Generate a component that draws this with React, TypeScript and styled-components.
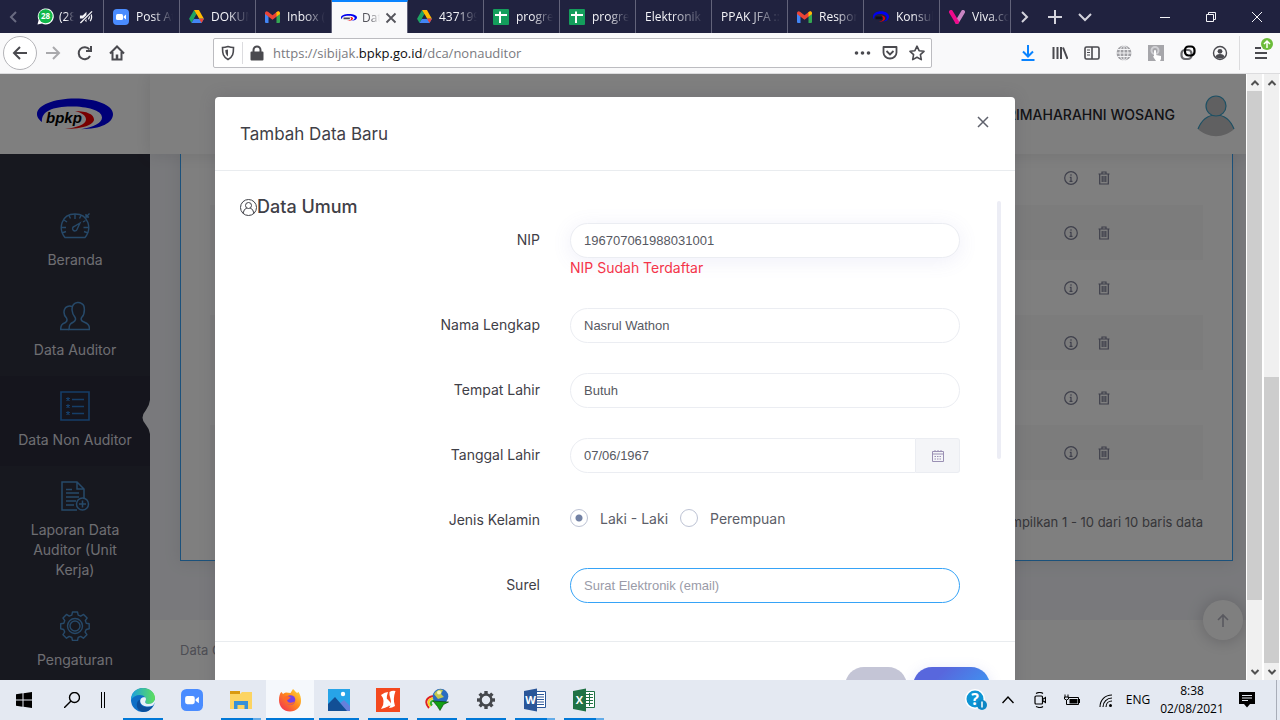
import React from "react";
import styled, { createGlobalStyle, css } from "styled-components";

const ui = `Inter, "Liberation Sans", sans-serif`;
const chrome = `"Open Sans", "Noto Sans", sans-serif`;

const Global = createGlobalStyle`
  * { box-sizing: border-box; }
  body { margin: 0; overflow: hidden; }
  button { border: 0; padding: 0; margin: 0; background: none; color: inherit; font: inherit; cursor: pointer; }
  a { color: inherit; text-decoration: none; }
  svg { display: block; flex: none; }
`;

const Screen = styled.div`
  display: grid;
  grid-template-rows: auto auto minmax(0, 1fr) auto;
  height: 100vh;
  font-family: ${ui};
`;

/* ---------- Browser chrome ---------- */

const TabBar = styled.div`
  display: flex;
  height: 33px;
  background: #20223f;
  color: #f4f4f8;
  font: 12px/33px ${chrome};
`;
const ScrollTabs = styled.button`
  width: 28px;
  display: grid;
  place-items: center;
  color: #686a80;
`;
const TabStrip = styled.div`
  display: flex;
  flex: 0 1 983px;
  min-width: 0;
  overflow: hidden;
  border-right: 1px solid #62637a;
`;
const Tab = styled.button<{ $active?: boolean; $tight?: boolean }>`
  display: flex;
  align-items: center;
  flex: none;
  gap: ${(p) => (p.$tight ? 5 : 7)}px;
  width: 76px;
  padding: 0 ${(p) => (p.$tight ? 10 : 6)}px 0 9px;
  border-right: 1px solid #62637a;
  text-align: left;
  ${(p) => p.$active && css`
    background: #f9f9fa;
    color: #55555c;
    border-top: 2px solid #0a84ff;
    line-height: 31px;
  `}
`;
const TabText = styled.span`
  flex: 1;
  min-width: 0;
  overflow: hidden;
  white-space: nowrap;
  mask-image: linear-gradient(to right, #000 45%, transparent);
`;
const StripTools = styled.div`
  display: flex;
  align-items: center;
  color: #d3d3dc;
  button { width: 30px; display: grid; place-items: center; }
`;
const WindowTools = styled.div`
  display: flex;
  align-items: center;
  margin-left: auto;
  button { width: 46px; height: 33px; display: grid; place-items: center; }
`;

const NavBar = styled.div`
  display: flex;
  align-items: center;
  height: 41px;
  padding: 0 3px;
  background: #f9f9fa;
  border-bottom: 1px solid #dcdcde;
  color: #4a4a4f;
`;
const NavButton = styled.button<{ $dim?: boolean }>`
  display: grid;
  place-items: center;
  position: relative;
  width: 32px;
  height: 34px;
  opacity: ${(p) => (p.$dim ? 0.45 : 1)};
`;
const BackButton = styled(NavButton)`
  width: 34px;
  border: 1px solid #b4b4b8;
  border-radius: 50%;
  background: #fff;
`;
const Address = styled.div`
  display: flex;
  align-items: center;
  flex: 0 1 719px;
  min-width: 0;
  height: 30px;
  margin: 0 auto 0 80px;
  padding: 0 6px;
  border: 1px solid #bcbcc0;
  border-radius: 2px;
  background: #fff;
`;
const AddressDivider = styled.span`
  width: 1px;
  height: 22px;
  margin: 0 6px;
  background: #dcdcdf;
`;
const AddressText = styled.div`
  flex: 1;
  min-width: 0;
  margin-left: 8px;
  overflow: hidden;
  white-space: nowrap;
  font: 13px/28px ${chrome};
  color: #7a7a80;
  strong { font-weight: 400; color: #0c0c0d; }
`;
const AddressTools = styled.div`
  display: flex;
  gap: 11px;
`;
const MenuButton = styled(NavButton)`
  width: 38px;
  margin-left: 3px;
  padding-left: 5px;
  border-left: 1px solid #dcdcde;
`;
const UpdateBadge = styled.span`
  position: absolute;
  top: 2px;
  right: 4px;
`;

/* ---------- Page ---------- */

const Viewport = styled.div`
  display: flex;
  min-height: 0;
  background: #fff;
`;
const AppFrame = styled.div`
  position: relative;
  display: grid;
  grid-template-columns: 150px minmax(0, 1fr);
  flex: 1;
  min-width: 0;
  overflow: hidden;
`;
const Sidebar = styled.aside`
  display: flex;
  flex-direction: column;
  min-height: 0;
  background: #2f303e;
`;
const Brand = styled.div`
  display: grid;
  place-items: center;
  flex: none;
  height: 80px;
  background: #fff;
`;
const Menu = styled.nav`
  padding-top: 42px;
`;
const MenuItem = styled.a<{ $active?: boolean }>`
  position: relative;
  display: flex;
  flex-direction: column;
  align-items: center;
  gap: 9px;
  padding: 15px 16px 16px;
  color: #dcdce2;
  background: ${(p) => (p.$active ? "#2a2b3a" : "transparent")};
  font-size: 14px;
  line-height: 20px;
  text-align: center;
  svg { color: ${(p) => (p.$active ? "#2c7cd0" : "#4d92d2")}; }
`;
const Notch = styled.span`
  position: absolute;
  right: 0;
  top: 24px;
`;

const Main = styled.div`
  display: flex;
  flex-direction: column;
  min-width: 0;
  min-height: 0;
  background: #f2f3f8;
`;
const TopBar = styled.header`
  position: relative;
  z-index: 1;
  display: flex;
  align-items: center;
  justify-content: flex-end;
  gap: 22px;
  flex: none;
  height: 80px;
  padding-right: 11px;
  background: #fff;
  box-shadow: 0 1px 15px 1px rgba(69, 65, 78, 0.12);
  color: #26262c;
  font-size: 14px;
  font-weight: 500;
`;
const Card = styled.section`
  flex: none;
  margin: -5px 13px 59px 30px;
  padding: 0 29px 27px;
  border: 1px solid #36a3f7;
  background: #fff;
  box-shadow: 0 1px 15px 1px rgba(69, 65, 78, 0.1);
`;
const Table = styled.table`
  width: 100%;
  border-collapse: collapse;
  tr:nth-child(even) { background: #f8f8f9; }
  td { height: 55px; padding: 0; }
`;
const ActionCell = styled.td`
  width: 139px;
`;
const Actions = styled.div`
  display: flex;
  gap: 20px;
  color: #7d7f96;
`;
const Summary = styled.p`
  margin: 31px 0 0;
  text-align: right;
  font-size: 13px;
  line-height: 22px;
  color: #6c6c72;
`;
const Footer = styled.footer`
  flex: 1;
  padding: 20px 30px;
  background: #fff;
  color: #9a9ba8;
  font-size: 13px;
  line-height: 20px;
`;
const ToTop = styled.button`
  position: absolute;
  right: 3px;
  bottom: 40px;
  display: grid;
  place-items: center;
  width: 40px;
  height: 40px;
  border-radius: 50%;
  background: #fff;
  color: #b2b2bf;
  box-shadow: 0 1px 15px 1px rgba(69, 65, 78, 0.25);
`;

/* ---------- Modal ---------- */

const Backdrop = styled.div`
  position: absolute;
  inset: 0;
  z-index: 2;
  display: flex;
  justify-content: center;
  align-items: flex-start;
  padding: 23px 16px 0 0;
  overflow: hidden;
  background: rgba(0, 0, 0, 0.5);
`;
const Dialog = styled.div`
  flex: 0 1 800px;
  border-radius: 4px;
  background: #fff;
  box-shadow: 0 0 15px 1px rgba(69, 65, 78, 0.2);
  color: #3f4047;
`;
const DialogHead = styled.div`
  display: flex;
  justify-content: space-between;
  align-items: flex-start;
  height: 74px;
  padding: 18px 25px;
  border-bottom: 1px solid #e9ecef;
`;
const DialogTitle = styled.h5`
  margin: 8px 0 0;
  font-size: 17px;
  line-height: 22px;
  font-weight: 400;
`;
const CloseButton = styled.button`
  color: #5f616c;
`;
const DialogBody = styled.div`
  display: flex;
  align-items: flex-start;
  padding: 25px 14px 38px 25px;
  border-bottom: 1px solid #e9ecef;
`;
const Form = styled.form`
  flex: 1;
  padding-right: 37px;
`;
const ScrollThumb = styled.div`
  width: 4px;
  height: 258px;
  margin-top: 5px;
  border-radius: 4px;
  background: #ecedf5;
`;
const SectionTitle = styled.h4`
  display: flex;
  align-items: center;
  margin: 0 0 5px;
  font-size: 18px;
  line-height: 22px;
  font-weight: 500;
`;
const Row = styled.div`
  display: grid;
  grid-template-columns: 10fr 13fr;
  column-gap: 30px;
  & + & { margin-top: 30px; }
`;
const Label = styled.label`
  font-size: 14px;
  line-height: 34px;
  text-align: right;
`;
const Input = styled.input<{ $state?: "raised" | "focus" }>`
  display: block;
  width: 100%;
  min-width: 0;
  height: 35px;
  padding: 0 13px;
  border: 1px solid ${(p) => (p.$state === "focus" ? "#36a3f7" : "#ebedf2")};
  border-radius: 20px;
  outline: 0;
  background: #fff;
  box-shadow: ${(p) => (p.$state === "raised" ? "0 3px 20px 0 rgba(113, 106, 202, 0.11)" : "none")};
  color: #575962;
  font: 13px "Liberation Sans", Arial, sans-serif;
  &::placeholder { color: #9a9ba8; opacity: 1; }
`;
const ErrorText = styled.div`
  font-size: 14px;
  line-height: 20px;
  color: #f4354a;
`;
const InputGroup = styled.div`
  display: flex;
  ${Input} { flex: 1; border-radius: 20px 0 0 20px; }
`;
const Addon = styled.button`
  display: grid;
  place-items: center;
  width: 44px;
  border: 1px solid #ebedf2;
  border-left: 0;
  border-radius: 0 3px 3px 0;
  background: #f4f5f8;
  color: #9a90b4;
`;
const Choices = styled.div`
  display: flex;
  gap: 12px;
  height: 35px;
`;
const Choice = styled.label`
  display: flex;
  align-items: center;
  gap: 12px;
  height: 30px;
  font-size: 14px;
  color: #5c5e68;
`;
const Radio = styled.input`
  appearance: none;
  width: 18px;
  height: 18px;
  margin: 0;
  border: 1px solid #bdc3d4;
  border-radius: 50%;
  &:checked { background: radial-gradient(circle, #7281a4 3px, transparent 4px); }
`;
const DialogFoot = styled.div`
  display: flex;
  justify-content: flex-end;
  gap: 6px;
  padding: 25px;
`;
const Action = styled.button<{ $primary?: boolean }>`
  width: ${(p) => (p.$primary ? 77 : 62)}px;
  height: 38px;
  border-radius: 20px;
  background: ${(p) => (p.$primary ? "linear-gradient(135deg, #5867dd 30%, #36a3f7)" : "#c4c5d6")};
  box-shadow: ${(p) => (p.$primary ? "0 3px 14px rgba(88, 103, 221, 0.18)" : "none")};
`;

/* ---------- Window scroll bars ---------- */

const Bar = styled.div`
  display: flex;
  flex-direction: column;
  flex: none;
  width: 17px;
  border-left: 1px solid #fff;
  border-right: 1px solid #fff;
  background: #f0f0f0;
  color: #505050;
`;
const BarArrow = styled.button`
  display: grid;
  place-items: center;
  width: 15px;
  height: 17px;
`;
const Track = styled.div`
  flex: 1;
`;
const Thumb = styled.div<{ $from: number; $size: number }>`
  height: ${(p) => p.$from + p.$size}%;
  background: linear-gradient(#cdcdcd, #cdcdcd) bottom / 100% ${(p) => (p.$size / (p.$from + p.$size)) * 100}% no-repeat;
`;

/* ---------- Taskbar ---------- */

const Taskbar = styled.div`
  display: flex;
  align-items: stretch;
  height: 40px;
  background: #e4e9f2;
  color: #000;
`;
const TaskGroup = styled.div`
  display: flex;
  gap: 1px;
`;
const StartGroup = styled(TaskGroup)`
  gap: 0;
  margin-right: 9px;
`;
const TaskButton = styled.button<{ $w?: number; $active?: boolean; $line?: "one" | "many" }>`
  display: grid;
  place-items: center;
  width: ${(p) => p.$w ?? 48}px;
  ${(p) => p.$active && css`background-color: #f5f8fc;`}
  ${(p) => p.$line && css`
    background-image: linear-gradient(to right, #0078d7 ${p.$line === "many" ? "80%" : "100%"}, #62abe8 0);
    background-repeat: no-repeat;
    background-size: ${p.$active ? 48 : 40}px 2px;
    background-position: bottom center;
  `}
`;
const Tray = styled.div`
  display: flex;
  align-items: center;
  margin-left: auto;
  font: 12px/18px ${chrome};
`;
const TrayButton = styled.button<{ $w?: number }>`
  display: grid;
  place-items: center;
  width: ${(p) => p.$w ?? 32}px;
  height: 40px;
  white-space: nowrap;
`;
const Clock = styled.time`
  width: 76px;
  text-align: center;
`;
const Peek = styled.span`
  width: 4px;
  height: 40px;
  margin-left: 12px;
  border-left: 1px solid #a8adb8;
`;

/* ---------- Drawings ---------- */

type LineProps = { w?: number; h?: number; box?: string; sw?: number; children: React.ReactNode };
const Line = ({ w = 16, h = w, box = `0 0 ${w} ${h}`, sw = 1, children }: LineProps) => (
  <svg width={w} height={h} viewBox={box} fill="none" stroke="currentColor" strokeWidth={sw} aria-hidden="true">
    {children}
  </svg>
);

const Chevron = ({ d, sw = 2 }: { d: string; sw?: number }) => <Line sw={sw}><path d={d} /></Line>;

const WhatsApp = () => (
  <svg width="17" height="17" viewBox="0 0 17 17" aria-hidden="true">
    <path d="M0.5 16.5 1.6 12A8 8 0 1 1 5 15.5Z" fill="#fff" />
    <circle cx="8.6" cy="8.3" r="7" fill="#12b84a" />
    <text x="8.6" y="11.2" fontSize="8" fontWeight="700" textAnchor="middle" fill="#fff" fontFamily="Open Sans">28</text>
  </svg>
);
const Muted = () => (
  <Line w={14} box="0 0 15 15" sw={1.4}>
    <path d="M1 6h3l4-4v11L4 9H1Z" fill="currentColor" stroke="none" />
    <path d="M10 5q2 2.5 0 5M12 3q3 4.5 0 9" />
    <path d="M1.5 14 14 1.5" stroke="#20223f" strokeWidth="3" />
    <path d="M1.5 14 14 1.5" />
  </Line>
);
const ZoomLogo = ({ s = 16 }: { s?: number }) => (
  <svg width={s} height={s} viewBox="0 0 16 16" aria-hidden="true">
    <rect width="16" height="16" rx="4" fill="#4a8cff" />
    <rect x="3" y="5" width="7" height="6" rx="1.5" fill="#fff" />
    <path d="M10.6 7.4 13 5.6v4.8l-2.4-1.8Z" fill="#fff" />
  </svg>
);
const Drive = () => (
  <svg width="15" height="13" viewBox="0 0 16 14" aria-hidden="true">
    <path d="M5.4 0h5.2L8 4.5Z" fill="#188038" />
    <path d="M5.4 0 0 9.3 2.6 14 8 4.5Z" fill="#1ea362" />
    <path d="M5.4 0h5.2L16 9.3h-5.3Z" fill="#ffba00" />
    <path d="M5.3 9.3H16L13.4 14H2.6Z" fill="#4285f4" />
    <path d="M10.7 9.3H16L13.4 14Z" fill="#ea4335" />
    <path d="M8 4.7 5.3 9.3h5.4Z" fill="#20223f" />
  </svg>
);
const Gmail = () => (
  <svg width="15" height="12" viewBox="0 0 15 12" aria-hidden="true">
    <path d="M0 2v9q0 1 1 1h2.5V4.8Z" fill="#4285f4" />
    <path d="M15 2v9q0 1-1 1h-2.5V4.8Z" fill="#34a853" />
    <path d="M0 1.8Q.8-.8 3 .8l4.5 3.5L12 .8q2.200-1.600 3 1v1.100L7.500 8.700 0 2.900Z" fill="#ea4335" />
    <path d="M11.500 1.200 12 .8q2.200-1.600 3 1v1.100l-3.500 2.700Z" fill="#fbbc04" />
  </svg>
);
const Sheets = () => (
  <svg width="16" height="16" viewBox="0 0 16 16" aria-hidden="true">
    <rect width="16" height="16" rx="1" fill="#149e5c" />
    <path d="M6 2.500h2V5h6v2H8v7H6V7H2V5h4Z" fill="#fff" />
  </svg>
);
const Bpkp = ({ w, h, text = true, dark }: { w: number; h: number; text?: boolean; dark?: boolean }) => (
  <svg width={w} height={h} viewBox="0 0 76 32" preserveAspectRatio="none" aria-hidden="true">
    <path d="M38 0.500C59 .5 76 7 76 16S64 31 44 31.200C57 29 65 25 65 19.500 65 12 50 8.500 34 8.500 16 8.500 4 13 5 24 1 21 0 18.500 0 16 0 7 17 .5 38 .5Z" fill="#0000f0" />
    <path d="M38 13c12 0 19 3.500 19 8.500S46 31 28 31c11-1 21-4.500 21-9.500 0-4-4-6.500-11-8.500Z" fill="#f00000" />
    {text ? (
      <text x="9" y="25" fontFamily="Liberation Sans" fontSize="15" fontWeight="700" fontStyle="italic" fill="#000">bpkp</text>
    ) : (
      <path d="M12 16h30v8H12Z" fill={dark ? "#101018" : "#445"} />
    )}
  </svg>
);
const Viva = () => (
  <svg width="16" height="14" viewBox="0 0 16 14" fill="none" strokeWidth="4" strokeLinecap="round" aria-hidden="true">
    <path d="M8 12 14 2" stroke="#c884c2" />
    <path d="M2 2l6 10" stroke="#ee0a8c" />
  </svg>
);

const Globe = () => (
  <Line w={16} sw={1}>
    <circle cx="8" cy="8" r="7.500" fill="#a0a0a4" stroke="none" />
    <g stroke="#f4f4f6"><path d="M0 8h16M1.500 4.500h13M1.500 11.500h13M8 0v16" /><ellipse cx="8" cy="8" rx="4" ry="7.500" /></g>
  </Line>
);

const Gauge = () => (
  <Line w={30} sw={1.4}>
    <path d="M5 26.500C-2 18 1 3 15 3s17 15 10 23.500Z" />
    <path d="M15 3v5M9 4.500l1.500 3M4 9l3 2M1 16.500h5M2 22l4-1.500M28.500 16.500h-5M28 22l-4-1.500M21 4.500l-1.500 3M25.500 9.500 23 11M20 12l-6 3.500a2.300 2.300 0 1 0 3 3ZM29.500 2.500 26 6M26 3v3h3" />
  </Line>
);
const People = () => (
  <Line w={30} sw={1.5}>
    <path d="M9 28.500h20.500c0-5-2-6-5.500-7.500-3-1-3.500-3-2-5 3-3 3.500-12-.500-13.500-2-1.500-6-1.500-8 1-2.500 3-1.500 9 1 12 1.500 2 1.500 4-1 5.500-3 1.500-4.500 2.500-4.500 7.500Z" />
    <path d="M12 5.500c-3-1-6.500 0-7.500 3-1 3 0 6.500 2 8.500 1 2 1 3-1 4.500C2 23 .7 24 .7 28.500H9" />
  </Line>
);
const List = () => (
  <Line w={30} sw={1.6}>
    <path d="M1 1h28v28H1ZM12 8.500h12M12 15.500h12M12 22.500h12" />
    <path d="M8 6v4M6 7.500h4M6.500 10 8 8l1.500 2M8 13v4M6 14.500h4M6.500 17 8 15l1.500 2M8 20v4M6 21.500h4M6.500 24 8 22l1.500 2" strokeWidth="1" />
  </Line>
);
const Report = () => (
  <Line w={30} sw={1.5}>
    <path d="M17 29H2V1h15l7 7v10M17 1v7h7M6 8.500h6M6 12h13M6 16h13M6 20h10M6 24h8" />
    <circle cx="22.500" cy="23" r="6" /><path d="M22.500 19.500v7M19 23h7" />
  </Line>
);
const Gear = () => (
  <Line w={30} sw={1.4}>
    <circle cx="15" cy="15" r="7.500" /><circle cx="15" cy="15" r="5" />
    <path d="M12.500 1h5l.7 3.200 2.500 1L23.600 3.400l3.500 3.600-1.800 2.600 1 2.600 2.900.6v5l-3 .7-1.100 2.500 1.800 2.700-3.500 3.500-2.700-1.800-2.500 1-.7 3.100h-5l-.7-3-2.600-1.100-2.700 1.800L3 23.700l1.700-2.700-1-2.500-3-.7v-5l3.100-.6 1-2.600L3 7l3.500-3.600 2.700 1.800 2.600-1Z" strokeLinejoin="round" />
  </Line>
);
const Info = () => (
  <Line w={14} sw={1.200}>
    <circle cx="7" cy="7" r="6.300" /><path d="M7 3.200v1.500M5.800 6.300H7v4M5.500 10.300h3" />
  </Line>
);
const Trash = () => (
  <Line w={12} h={14} sw={1.200}>
    <path d="M.5 3h11M4 3V1h4v2M1.700 3v10h8.600V3M4.200 5v6M6 5v6M7.800 5v6" />
  </Line>
);
const Avatar = () => (
  <svg width="38" height="46" viewBox="0 -4 38 46" fill="#c0c0c2" stroke="#3ba0c8" strokeWidth="1.200" aria-hidden="true">
    <path d="M1 34C5 24 11 20 19 20s14 4 18 14C28 43.500 10 43.500 1 34Z" stroke="none" />
    <path d="M1 34C5 24 11 20 19 20s14 4 18 14" />
    <circle cx="19" cy="11" r="10" />
  </svg>
);
const UserCircle = () => (
  <Line w={17} sw={1}>
    <circle cx="8.500" cy="8.500" r="8" /><circle cx="8.500" cy="6.500" r="3" />
    <path d="M3 14.300q1-4.800 3.800-5.200M14 14.300q-1-4.800-3.800-5.200" />
  </Line>
);

const Office = ({ c, l, grid }: { c: string; l: string; grid?: boolean }) => (
  <svg width="24" height="24" viewBox="0 0 24 24" aria-hidden="true">
    <path d="M13 3.500h9.500v16H13Z" fill="#fff" stroke={c} />
    <path d={grid ? "M14 6.500h7M14 9.500h7M14 12.500h7M14 15.500h7M17.500 5v13" : "M14 6.500h7M14 9h7M14 11.500h7M14 14h7M14 16.500h7"} stroke={c} />
    <path d="M1 3 14 .5v23L1 21Z" fill={c} />
    <text x="7.500" y="16" fontSize="11" fontWeight="700" textAnchor="middle" fill="#fff" fontFamily="Open Sans">{l}</text>
  </svg>
);

const Edge = () => (
  <svg width="24" height="24" viewBox="0 0 24 24" aria-hidden="true">
    <defs>
      <linearGradient id="edgeTop" x1="0" x2="1"><stop stopColor="#1aa0e0" /><stop offset="1" stopColor="#5ee05a" /></linearGradient>
    </defs>
    <circle cx="12" cy="12" r="12" fill="#0f6fc6" />
    <path d="M0 12C0 4 6 0 12 0s12 4 12 10c0 4-3 6-6.500 6-3 0-4-1.500-3-3C16 10 13 7 9 7 5 7 1.500 9 0 12Z" fill="url(#edgeTop)" />
    <path d="M9 12c-1 6 5 9 13 6-2 3-5 6-10 6-5-1-7-5-6-9 .5-2 1.500-3 3-3Z" fill="#0c4f9c" />
    <path d="M14.500 9.500c-4-1-6 2-5 5 1.300 4 8 5 12.500 3l2-3v-3c-1 3-4 4.500-6.500 4.500-3 0-4-1.500-3-3 .7-1.500.6-2.500 0-3.500Z" fill="#e8f1f8" />
  </svg>
);
const Explorer = () => (
  <svg width="22" height="20" viewBox="0 0 22 20" aria-hidden="true">
    <path d="M0 1h10v4H0Z" fill="#d99a10" /><path d="M0 4h10l2-2h10v17H0Z" fill="#fcd462" />
    <path d="M4 11h14v8h-3.500v-4h-7v4H4Z" fill="#3690d8" />
  </svg>
);
const Firefox = () => (
  <svg width="24" height="24" viewBox="0 0 24 24" aria-hidden="true">
    <defs>
      <linearGradient id="fox" x1="1" x2="0" y2="1"><stop stopColor="#ffe13d" /><stop offset=".45" stopColor="#ff8a1c" /><stop offset="1" stopColor="#f0245c" /></linearGradient>
    </defs>
    <path d="M1 12C1 8 2 5 3.500 4L5 6c1-1 2-1.500 3-1.500L12.500 5 15 1c2 2 3 3 4 4l1.500-1C22.500 7 23 10 23 13c0 6-5 10.500-11 10.500S1 19 1 12Z" fill="url(#fox)" />
    <circle cx="12.500" cy="12" r="4.800" fill="#7542e5" />
    <path d="M6 9c3-2 5-1 7 1-2 0-2 2-4 2 1 4 6 3 8 1-1 5-10 6-11-4Z" fill="#ff6a2a" />
  </svg>
);
const Photos = () => (
  <svg width="22" height="22" viewBox="0 0 22 22" aria-hidden="true">
    <path d="M0 0h22v22H0Z" fill="#27a4e8" /><path d="m10 16 6-5 6 6v5H10Z" fill="#6480dc" />
    <path d="m0 15 7-7 12 14H0Z" fill="#124f95" /><circle cx="15" cy="5" r="2.200" fill="#fff" />
  </svg>
);
const Nitro = () => (
  <svg width="24" height="24" viewBox="0 0 24 24" aria-hidden="true">
    <path d="M0 0h24v24H0Z" fill="#f4481e" />
    <path d="M5 7q4-3 7-3-3 8 1 14-4 2-8 3 3-4 2.500-8Q7 9 5 7Z" fill="#fff" />
    <path d="M13.500 4q3-2 6-1-3 8-.5 15-3 2-6 2 3-4 1.500-9-1.500-4-1-7Z" fill="#fff" />
    <path d="M7 9q5 1 9 8l-3 1Q9 13 7 9Z" fill="#fff" />
  </svg>
);
const Idm = () => (
  <svg width="24" height="24" viewBox="0 0 24 24" fill="none" aria-hidden="true">
    <path d="M4 20C-2 13 3 8 10 8" stroke="#e02020" strokeWidth="2" /><path d="M5.500 18.500C1 13 5 10 11 10" stroke="#f8d020" strokeWidth="2" /><path d="M7 17.500C4 14 7 12 12 12" stroke="#30b030" strokeWidth="2" />
    <circle cx="15.500" cy="8.500" r="7.800" fill="#2a6cc0" /><path d="M9 6q4-6 9-4l-2 4 3 3-6 2Z" fill="#c4c850" /><circle cx="14" cy="4.500" r="2" fill="#f4f4c0" />
    <path d="M8 13 23.500 14l-5 2.500-3.500 6-2.500-4Z" fill="#12a012" stroke="#063806" strokeWidth=".6" />
  </svg>
);
const SettingsIcon = () => (
  <svg width="20" height="20" viewBox="-10 -10 20 20" fill="none" stroke="#44474c" aria-hidden="true">
    <circle r="5.500" strokeWidth="2.600" />
    {[0, 45, 90, 135, 180, 225, 270, 315].map((a) => (
      <path key={a} d="M0-6v-3" strokeWidth="3.400" transform={`rotate(${a})`} />
    ))}
  </svg>
);
const Windows = () => (
  <svg width="16" height="16" viewBox="0 0 16 16" aria-hidden="true">
    <path d="M0 2.200 6.500 1.300v6.200H0ZM7.500 1.200 16 0v7.500H7.500ZM0 8.500h6.500v6.200L0 13.800ZM7.500 8.500H16V16l-8.500-1.200Z" />
  </svg>
);
const Help = () => (
  <svg width="23" height="22" viewBox="0 0 23 22" aria-hidden="true">
    <circle cx="10" cy="10" r="10" fill="#fff" /><circle cx="10" cy="10" r="8.500" fill="#0c94d4" />
    <text x="10" y="16" fontSize="16" fontWeight="700" textAnchor="middle" fill="#fff" fontFamily="Open Sans">?</text>
    <circle cx="17" cy="16" r="5" fill="#0c86c4" /><path d="M17 12.500v6" stroke="#fff" strokeWidth="1.500" />
  </svg>
);

/* ---------- Data ---------- */

const tabsBefore = [
  { icon: <ZoomLogo />, text: "Post At" },
  { icon: <Drive />, text: "DOKUM" },
  { icon: <Gmail />, text: "Inbox (" },
];
const tabsAfter = [
  { icon: <Drive />, text: "437199" },
  { icon: <Sheets />, text: "progre" },
  { icon: <Sheets />, text: "progre" },
  { icon: null, text: "Elektronik B" },
  { icon: null, text: "PPAK JFA ::" },
  { icon: <Gmail />, text: "Respon" },
  { icon: <Bpkp w={16} h={11} text={false} dark />, text: "Konsul" },
  { icon: <Viva />, text: "Viva.co" },
];
const menu = [
  { icon: <Gauge />, text: "Beranda" },
  { icon: <People />, text: "Data Auditor" },
  { icon: <List />, text: "Data Non Auditor", active: true },
  { icon: <Report />, text: "Laporan Data Auditor (Unit Kerja)" },
  { icon: <Gear />, text: "Pengaturan" },
];
const apps: { name: string; icon: React.ReactNode; line?: "one" | "many"; active?: boolean }[] = [
  { name: "Edge", icon: <Edge />, line: "one" },
  { name: "Zoom", icon: <ZoomLogo s={22} /> },
  { name: "Explorer", icon: <Explorer />, line: "many" },
  { name: "Firefox", icon: <Firefox />, line: "one", active: true },
  { name: "Photos", icon: <Photos />, line: "one" },
  { name: "Nitro", icon: <Nitro />, line: "one" },
  { name: "Download Manager", icon: <Idm />, line: "one" },
  { name: "Settings", icon: <SettingsIcon />, line: "one" },
  { name: "Word", icon: <Office c="#2a5699" l="W" />, line: "many" },
  { name: "Excel", icon: <Office c="#1f7244" l="X" grid />, line: "many" },
];

const PlainTab = ({ icon, text }: { icon: React.ReactNode; text: string }) => (
  <Tab>{icon}<TabText>{text}</TabText></Tab>
);

const ScrollBar = ({ from, size }: { from: number; size: number }) => (
  <Bar>
    <BarArrow aria-label="Scroll up"><Line w={10} sw={2}><path d="M1.500 7 5 3.500 8.500 7" /></Line></BarArrow>
    <Track><Thumb $from={from} $size={size} /></Track>
    <BarArrow aria-label="Scroll down"><Line w={10} sw={2}><path d="M1.500 3 5 6.500 8.500 3" /></Line></BarArrow>
  </Bar>
);

export default function App() {
  return (
    <Screen>
      <Global />
      <TabBar>
        <ScrollTabs aria-label="Previous tabs"><Chevron d="M10 3 5 8l5 5" /></ScrollTabs>
        <TabStrip>
          <Tab $tight><WhatsApp /><TabText>(28)</TabText><Muted /></Tab>
          {tabsBefore.map((t) => <PlainTab key={t.text} {...t} />)}
          <Tab $active $tight>
            <Bpkp w={16} h={7} text={false} /><TabText>Data</TabText>
            <Line w={12} sw={1.800}><path d="m1.500 1.500 9 9M10.500 1.500l-9 9" /></Line>
          </Tab>
          {tabsAfter.map((t, i) => <PlainTab key={i} {...t} />)}
        </TabStrip>
        <StripTools>
          <button aria-label="Next tabs"><Chevron d="m4 3 5 5-5 5" /></button>
          <button aria-label="New tab"><Chevron d="M7 1v14M0 8h14" /></button>
          <button aria-label="All tabs"><Chevron d="m1 5 6 6 6-6" /></button>
        </StripTools>
        <WindowTools>
          <button aria-label="Minimize"><Line w={10}><path d="M0 5.500h10" /></Line></button>
          <button aria-label="Restore"><Line w={10}><path d="M.5 2.500h7v7h-7ZM2.500 2.500v-2h7v7h-2" /></Line></button>
          <button aria-label="Close"><Line w={10}><path d="m0 0 10 10M10 0 0 10" /></Line></button>
        </WindowTools>
      </TabBar>

      <NavBar>
        <BackButton aria-label="Back"><Line sw={2}><path d="M15 8H2M8 2 2 8l6 6" /></Line></BackButton>
        <NavButton $dim aria-label="Forward"><Line sw={2}><path d="M1 8h13M8 2l6 6-6 6" /></Line></NavButton>
        <NavButton aria-label="Reload"><Line sw={2}><path d="M13 11a6 6 0 1 1-.500-6.500M14 1v5H9" /></Line></NavButton>
        <NavButton aria-label="Home"><Line sw={2}><path d="M1 8.500 8 1.500l7 7M3.500 7v7.500h9V7" /><path d="M8 14v-4.500" strokeWidth="2.500" /></Line></NavButton>
        <Address>
          <Line sw={1.600}><path d="M2.500 2.500C5 2.500 6.500 2 8 1.500c1.500.5 3 1 5.500 1 0 6-.5 9.500-5.500 12-5-2.500-5.500-6-5.500-12Z" /><path d="M8 4.500v7c-2-1.500-2.700-3.500-2.700-6.500Z" fill="currentColor" stroke="none" /></Line>
          <AddressDivider />
          <Line sw={2}><path d="M2.500 7.500h11v7h-11Z" fill="currentColor" strokeLinejoin="round" /><path d="M4.500 7V5a3.500 3.500 0 0 1 7 0v2" /></Line>
          <AddressText role="textbox" aria-label="Address">https://sibijak.<strong>bpkp.go.id</strong>/dca/nonauditor</AddressText>
          <AddressTools>
            <button aria-label="Page actions"><Line w={17} h={16}><g fill="currentColor" stroke="none"><circle cx="2.500" cy="8" r="1.800" /><circle cx="8.500" cy="8" r="1.800" /><circle cx="14.500" cy="8" r="1.800" /></g></Line></button>
            <button aria-label="Pocket"><Line sw={1.800}><path d="M1.500 2h13v5.500a6.500 6 0 0 1-13 0Z" strokeLinejoin="round" /><path d="m4.500 6 3.500 3.500L11.500 6" /></Line></button>
            <button aria-label="Bookmark"><Line sw={1.600}><path d="m8 1.200 2.100 4.500 4.900.6-3.600 3.400.9 4.900L8 12.200l-4.300 2.400.9-4.900L1 6.300l4.900-.6Z" strokeLinejoin="round" /></Line></button>
          </AddressTools>
        </Address>
        <NavButton aria-label="Downloads"><svg width="16" height="16" fill="none" stroke="#0a84ff" strokeWidth="2"><path d="M8 0v11M3 6.500l5 5 5-5M1.500 15h13" /></svg></NavButton>
        <NavButton aria-label="Library"><Line sw={2}><path d="M1.500 2v12M5.500 2v12M9 2v12M11 2.500l4.500 11.500" /></Line></NavButton>
        <NavButton aria-label="Sidebar"><Line sw={1.600}><rect x="1" y="2" width="14" height="12" rx="1.500" /><path d="M8 2v12" /><path d="M3 5h3M3 7.500h3M3 10h3" strokeWidth="1" /></Line></NavButton>
        <NavButton aria-label="Translate"><Globe /></NavButton>
        <NavButton aria-label="Capture"><Line><path d="M0 0h16v16H0Z" fill="#a6a6aa" stroke="none" /><circle cx="7" cy="5.500" r="3.500" stroke="#d0d0d4" strokeWidth="2" /><path d="M6 5.500q1-1 2 0V10l5 1v3l-1 2H8l-3-4.500 1-.5Z" fill="#fff" stroke="none" /></Line></NavButton>
        <NavButton aria-label="Container"><Line sw={2.200}><rect x="1.500" y="5" width="10" height="9" rx="3.500" stroke="#6a6a6e" /><rect x="5" y="1.500" width="9.500" height="9" rx="3.500" stroke="#000" /></Line></NavButton>
        <NavButton aria-label="Account"><Line sw={1.400}><circle cx="8" cy="8" r="6.500" /><circle cx="8" cy="6.300" r="2.400" fill="currentColor" stroke="none" /><path d="M3.500 12q.5-3 4.500-3t4.500 3Q8 15 3.500 12Z" fill="currentColor" stroke="none" /></Line></NavButton>
        <MenuButton aria-label="Menu">
          <Line w={12} h={14} sw={2}><path d="M0 2h6M0 7h12M0 12h12" /></Line>
          <UpdateBadge><svg width="12" height="12"><circle cx="6" cy="6" r="6" fill="#6cbc3a" /><path d="M6 10V3M3 6l3-3 3 3" fill="none" stroke="#fff" strokeWidth="1.500" /></svg></UpdateBadge>
        </MenuButton>
      </NavBar>

      <Viewport>
        <AppFrame>
          <Sidebar>
            <Brand><Bpkp w={76} h={32} /></Brand>
            <Menu>
              {menu.map((m) => (
                <MenuItem key={m.text} href="#" $active={m.active}>
                  {m.icon}
                  <span>{m.text}</span>
                  {m.active && (
                    <Notch><svg width="8" height="34" viewBox="0 0 8 34"><path d="M8 0Q7.500 5 4 10-3 18 4 25q3.500 4 4 9Z" fill="#f2f3f8" /></svg></Notch>
                  )}
                </MenuItem>
              ))}
            </Menu>
          </Sidebar>

          <Main>
            <TopBar><span>RIMAHARAHNI WOSANG</span><Avatar /></TopBar>
            <Card>
              <Table>
                <tbody>
                  {[1, 2, 3, 4, 5, 6].map((n) => (
                    <tr key={n}>
                      <td />
                      <ActionCell>
                        <Actions>
                          <button aria-label="Detail"><Info /></button>
                          <button aria-label="Hapus"><Trash /></button>
                        </Actions>
                      </ActionCell>
                    </tr>
                  ))}
                </tbody>
              </Table>
              <Summary>Menampilkan 1 - 10 dari 10 baris data</Summary>
            </Card>
            <Footer>Data C</Footer>
          </Main>

          <ToTop aria-label="Ke atas"><Line w={14} sw={1.600}><path d="M7 14V2M2 7l5-5 5 5" /></Line></ToTop>

          <Backdrop>
            <Dialog role="dialog" aria-labelledby="dialog-title">
              <DialogHead>
                <DialogTitle id="dialog-title">Tambah Data Baru</DialogTitle>
                <CloseButton aria-label="Tutup"><Line w={14} sw={1.500}><path d="m2 2 10 10M12 2 2 12" /></Line></CloseButton>
              </DialogHead>
              <DialogBody>
                <Form>
                  <SectionTitle><UserCircle />Data Umum</SectionTitle>
                  <Row>
                    <Label htmlFor="nip">NIP</Label>
                    <div>
                      <Input id="nip" $state="raised" defaultValue="196707061988031001" />
                      <ErrorText>NIP Sudah Terdaftar</ErrorText>
                    </div>
                  </Row>
                  <Row>
                    <Label htmlFor="nama">Nama Lengkap</Label>
                    <Input id="nama" defaultValue="Nasrul Wathon" />
                  </Row>
                  <Row>
                    <Label htmlFor="tempat">Tempat Lahir</Label>
                    <Input id="tempat" defaultValue="Butuh" />
                  </Row>
                  <Row>
                    <Label htmlFor="tanggal">Tanggal Lahir</Label>
                    <InputGroup>
                      <Input id="tanggal" defaultValue="07/06/1967" />
                      <Addon type="button" aria-label="Pilih tanggal">
                        <Line w={12}><path d="M.5 1.500h11v10H.5ZM.5 4h11M3 0v2M6 0v2M9 0v2" /><path d="M2.500 6.500h7M2.500 9h7" strokeDasharray="1.500 1" /></Line>
                      </Addon>
                    </InputGroup>
                  </Row>
                  <Row>
                    <Label as="span" id="kelamin">Jenis Kelamin</Label>
                    <Choices role="radiogroup" aria-labelledby="kelamin">
                      <Choice><Radio type="radio" name="kelamin" defaultChecked />Laki - Laki</Choice>
                      <Choice><Radio type="radio" name="kelamin" />Perempuan</Choice>
                    </Choices>
                  </Row>
                  <Row>
                    <Label htmlFor="surel">Surel</Label>
                    <Input id="surel" type="email" $state="focus" placeholder="Surat Elektronik (email)" />
                  </Row>
                </Form>
                <ScrollThumb />
              </DialogBody>
              <DialogFoot>
                <Action aria-label="Batal" />
                <Action $primary aria-label="Simpan" />
              </DialogFoot>
            </Dialog>
          </Backdrop>
        </AppFrame>
        <ScrollBar from={0} size={89} />
        <ScrollBar from={50} size={50} />
      </Viewport>

      <Taskbar>
        <StartGroup>
          <TaskButton aria-label="Start"><Windows /></TaskButton>
          <TaskButton aria-label="Search"><Line sw={1.400}><circle cx="10.500" cy="5.500" r="5" /><path d="M7 9 0 16" /></Line></TaskButton>
          <TaskButton $w={14} aria-label="Task view"><Line w={4} h={16}><path d="M.5 0v16M3.500 0v16" /></Line></TaskButton>
        </StartGroup>
        <TaskGroup>
          {apps.map((a) => (
            <TaskButton key={a.name} aria-label={a.name} $line={a.line} $active={a.active}>{a.icon}</TaskButton>
          ))}
        </TaskGroup>
        <Tray>
          <TrayButton aria-label="Help"><Help /></TrayButton>
          <TrayButton aria-label="Hidden icons"><Line w={12} sw={1.400}><path d="m.5 9 5.500-6 5.500 6" /></Line></TrayButton>
          <TrayButton aria-label="Meet now"><Line w={12} h={16} sw={1.200}><rect x="1" y="4" width="7.500" height="8" rx="1" /><path d="m8.500 7.500 3-2v5l-3-2M2 1.500q4-2 7 0M2 14.500q4 2 7 0" /></Line></TrayButton>
          <TrayButton aria-label="Battery"><Line w={16} h={12}><path d="M4 3.500h10.500v7H5M15.500 5v4M1 .5v3M4 .5v3M.500 3v2q2 2 4 0V3ZM2.500 6v4.500H5" /><path d="M5.500 5h8v4.500h-8Z" fill="currentColor" stroke="none" /></Line></TrayButton>
          <TrayButton $w={34} aria-label="Network"><Line w={13} sw={1.100}><path d="M1 13C1 6 6 1 13 1M4 13c0-5 4-9 9-9M7 13c0-3.500 2.500-6 6-6" /><circle cx="11.500" cy="11.500" r="1.500" fill="currentColor" stroke="none" /></Line></TrayButton>
          <TrayButton>ENG</TrayButton>
          <Clock>8:38<br />02/08/2021</Clock>
          <TrayButton $w={34} aria-label="Notifications">
            <svg width="16" height="16"><path d="M0 0h16v12h-5l-3 3.500L5 12H0Z" /><path d="M3 3.500h10M3 6h10M3 8.500h6" stroke="#e4e9f2" /></svg>
          </TrayButton>
          <Peek />
        </Tray>
      </Taskbar>
    </Screen>
  );
}
